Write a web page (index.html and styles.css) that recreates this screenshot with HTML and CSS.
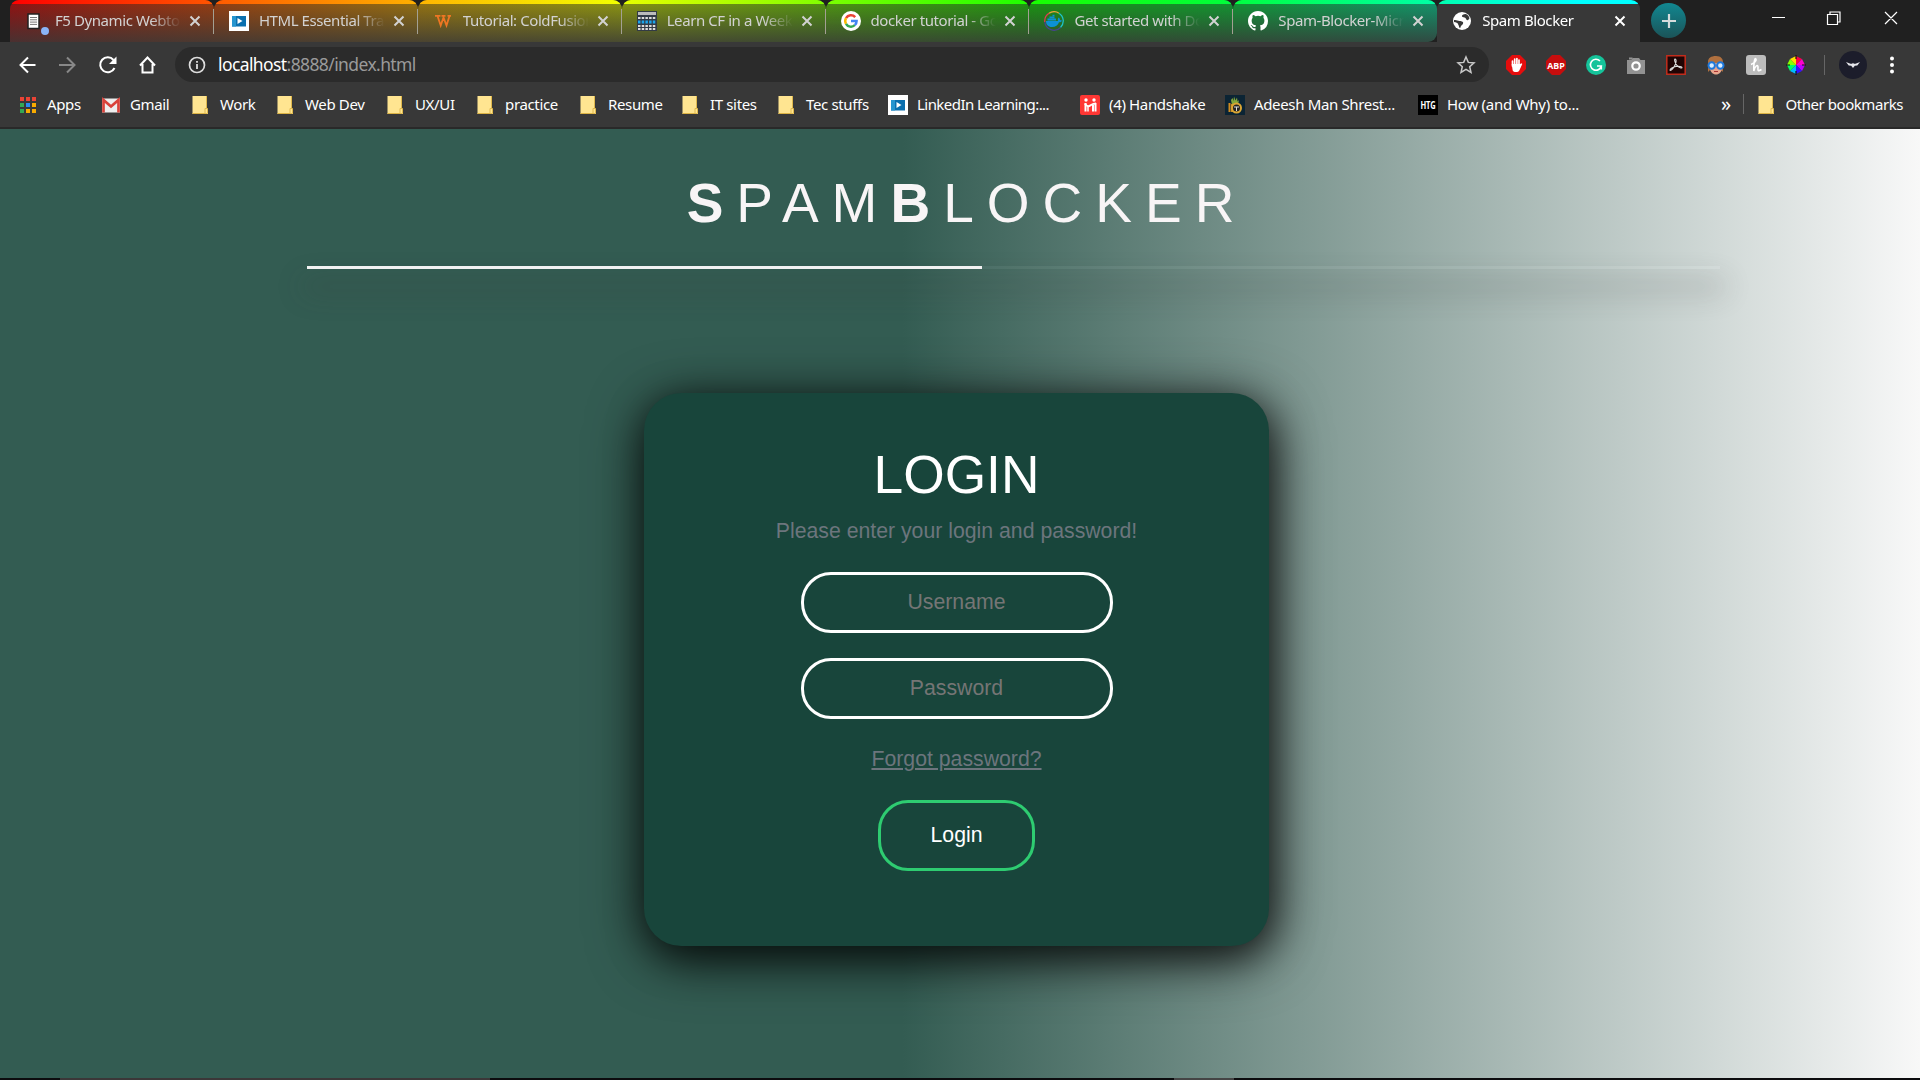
FILE: index.html
```html
<!DOCTYPE html>
<html lang="en">
<head>
<meta charset="utf-8">
<title>Spam Blocker</title>
<link rel="stylesheet" href="styles.css">
</head>
<body>
<svg class="defs" width="0" height="0">
  <defs>
    <symbol id="close" viewBox="0 0 12 12"><path d="M1.500 1.500l9 9M10.500 1.500l-9 9" stroke="currentColor" stroke-width="2" fill="none"/></symbol>
    <symbol id="folder" viewBox="0 0 20 20"><path d="M1.500 1h14v13h1.500v5H1.500z" fill="#ffe591"/><path d="M1.500 18.500H16" stroke="#dcb344"/><path d="M15.500 1v12.500M14 18.500v-5h2.500v5z" stroke="#e0b94d" fill="#ffe591"/></symbol>
    <symbol id="learn" viewBox="0 0 20 20"><path d="M0 0h20v20H0z" fill="#fff"/><path d="M3 5h14v10.500H3z" fill="#0a6fae"/><path d="M3 5h4v10.500H3z" fill="#2695cf"/><path d="M8.500 7l5 3-5 3z" fill="#fff"/></symbol>
  </defs>
</svg>
<header class="browser">
  <div class="tabstrip">
    <div class="tab t1">
      <svg class="fav" viewBox="0 0 20 20"><path d="M3 3h11v14.500H3z" fill="#fff" stroke="#222" stroke-width="1.500"/><path d="M5 6.500h7M5 8.800h7M5 11.100h7M5 13.400h7" stroke="#777"/></svg>
      <span class="title">F5 Dynamic Webtop</span><svg class="x"><use href="#close"/></svg><i class="dot"></i>
    </div>
    <div class="tab t2"><svg class="fav"><use href="#learn"/></svg><span class="title">HTML Essential Training</span><svg class="x"><use href="#close"/></svg></div>
    <div class="tab t3">
      <svg class="fav" viewBox="0 0 20 20"><path d="M2 4.800h5.500M8.500 4.800h4M14.500 4.800H18M4.500 5l3.200 9.500 2.800-8 3 8L16.500 5" fill="none" stroke="#ee7623" stroke-width="1.800"/></svg>
      <span class="title">Tutorial: ColdFusion</span><svg class="x"><use href="#close"/></svg>
    </div>
    <div class="tab t4">
      <svg class="fav" viewBox="0 0 20 20"><path d="M0 0h20v20H0z" fill="#333b45"/><path d="M1 1h18v3H1z" fill="#bbb"/><path d="M1 7h18M1 15h18M1 18h18" stroke="#ddd" stroke-width="2" stroke-dasharray="2.500 1.200"/><path d="M1 11h18" stroke="#1ca6ed" stroke-width="3" stroke-dasharray="2.500 1.200"/></svg>
      <span class="title">Learn CF in a Week</span><svg class="x"><use href="#close"/></svg>
    </div>
    <div class="tab t5">
      <svg class="fav" viewBox="0 0 20 20"><circle cx="10" cy="10" r="10" fill="#fff"/><g fill="none" stroke-width="2.500"><path d="M14.200 6.200A5.700 5.700 0 0 0 5 7.200" stroke="#ea4335"/><path d="M5 7.200a5.700 5.700 0 0 0 0 5.600" stroke="#fbbc05"/><path d="M5 12.800a5.700 5.700 0 0 0 8.800 1.400" stroke="#34a853"/><path d="M13.800 14.200A5.700 5.700 0 0 0 15.600 10H10" stroke="#4285f4"/></g></svg>
      <span class="title">docker tutorial - Google</span><svg class="x"><use href="#close"/></svg>
    </div>
    <div class="tab t6">
      <svg class="fav" viewBox="0 0 20 20"><g fill="none" stroke-width="1.300"><path d="M.8 11A9.200 9.200 0 0 1 5 2.300" stroke="#df3b52"/><path d="M5 2.300a9.200 9.200 0 0 1 10-.1" stroke="#e5a13b"/><path d="M15 2.200a9.200 9.200 0 0 1 1.500 14.300" stroke="#1dc3c9"/><path d="M.8 11a9.200 9.200 0 0 0 15.700 5.500" stroke="#48448d"/></g><path d="M2 10h12c-.5-2 0-3 .8-3.500.9.700 1.200 1.500 1.200 2.500l2 .5c-.5 1.500-2 1.700-3 1.700C14 14 11.500 16 8 16c-4 0-6-2.500-6-6zM3.500 7.500h8.500v2H3.500zM5.500 5.500h5v1.700h-5zM8.500 3.700h2v1.500h-2z" fill="#0c91d5"/></svg>
      <span class="title">Get started with Docker</span><svg class="x"><use href="#close"/></svg>
    </div>
    <div class="tab t7">
      <svg class="fav" viewBox="0 0 16 16"><path fill="#fff" d="M8 0C3.580 0 0 3.580 0 8c0 3.540 2.290 6.530 5.470 7.590.4.070.55-.17.55-.38 0-.19-.01-.82-.01-1.490-2.010.37-2.530-.49-2.690-.94-.09-.23-.48-.94-.82-1.130-.28-.15-.68-.52-.01-.53.63-.01 1.080.58 1.230.82.72 1.210 1.870.87 2.330.66.070-.52.280-.87.510-1.070-1.780-.2-3.640-.89-3.640-3.950 0-.87.310-1.590.82-2.150-.08-.2-.36-1.020.08-2.120 0 0 .67-.21 2.200.82a7.600 7.600 0 0 1 4 0c1.530-1.040 2.200-.82 2.200-.82.44 1.100.16 1.920.08 2.120.51.560.82 1.270.82 2.150 0 3.070-1.870 3.750-3.650 3.950.29.250.54.730.54 1.480 0 1.070-.01 1.930-.01 2.200 0 .21.15.46.55.38A8 8 0 0 0 16 8c0-4.420-3.580-8-8-8z"/></svg>
      <span class="title">Spam-Blocker-Micro</span><svg class="x"><use href="#close"/></svg>
    </div>
    <div class="tab active">
      <svg class="fav" viewBox="0 0 20 20"><circle cx="10" cy="10" r="9" fill="#fff"/><path d="M13.500 3c-2 0-4 1-3.500 2.500.4 1.200 2.500.5 3.500 1.500.8.800.3 2 2.500 2.300l1.500-2c-.5-2-2-3.800-4-4.300zM2 9c2.500-.5 3.500.8 5.500 1 2.500.3 4.300.5 3.500 2.800-.5 1.500-2.300 1.200-2.500 4l-1.500-.3c.3-2-.8-2.300-1-3.500-.2-1.300-2-1.500-4-2z" fill="#383838"/></svg>
      <span class="title">Spam Blocker</span><svg class="x"><use href="#close"/></svg>
    </div>
    <div class="newtab"><svg viewBox="0 0 14 14"><path d="M7 0v14M0 7h14" stroke="#d5dcdc" stroke-width="2.200"/></svg></div>
    <svg class="controls" viewBox="0 0 130 20"><g fill="none" stroke="#fff" stroke-width="1.200"><path d="M1 8.500h13M56.500 5.500h10v10h-10zM59 5.500V3h10v10h-2.500M114 3l12 12M126 3l-12 12"/></g></svg>
  </div>
  <div class="toolbar">
    <svg class="nav" viewBox="0 0 150 24"><g fill="none" stroke="#fff" stroke-width="2"><path d="M18.500 12H3.500M11 4.500L3.500 12l7.500 7.500"/><path d="M42 12h15.500M50 4.500l7.500 7.500-7.500 7.500" stroke="#888"/><path d="M96.500 7a7.500 7.500 0 1 0 1 8"/><path d="M123 12.500l7.500-8 7.500 8M125.500 11v8.500h10V11"/></g><path d="M99.500 3.500v7.500H92z" fill="#fff"/></svg>
    <div class="omnibox">
      <svg class="info" viewBox="0 0 18 18"><circle cx="9" cy="9" r="7.500" fill="none" stroke="#ddd" stroke-width="1.700"/><path d="M9 8v5M9 5v1.800" stroke="#ddd" stroke-width="1.800"/></svg>
      <span class="url"><b>localhost</b>:8888/index.html</span>
      <svg class="star" viewBox="0 0 20 20"><path d="M10 2l2.300 5.400 5.700.5-4.300 3.800 1.300 5.700-5-3-5 3 1.300-5.700L2 7.900l5.700-.5z" fill="none" stroke="#c8c8c8" stroke-width="1.500"/></svg>
    </div>
    <div class="exts">
      <svg viewBox="0 0 20 20"><path d="M6 0h8l6 6v8l-6 6H6l-6-6V6z" fill="#e40d0d"/><path d="M6.500 11V6M8.700 10V4M10.900 10V3.500M13 11V5" stroke="#fff" stroke-width="1.700" stroke-linecap="round"/><path d="M5.700 9H14l1.800-.8.500.8-3 6.500c-1 2-5.600 2-6.600 0z" fill="#fff"/></svg>
      <svg viewBox="0 0 20 20"><path d="M6 0h8l6 6v8l-6 6H6l-6-6V6z" fill="#c70d0d"/><text x="10" y="13.500" text-anchor="middle" class="abp" textLength="17.500" lengthAdjust="spacingAndGlyphs">ABP</text></svg>
      <svg viewBox="0 0 20 20"><circle cx="10" cy="10" r="10" fill="#15c39a"/><path d="M14 6a5.500 5.500 0 1 0 1.300 5H11M15.300 11v3.500" stroke="#fff" stroke-width="1.600" fill="none"/></svg>
      <svg viewBox="0 0 20 20"><path d="M1 5h4.500L7 3h6l1.500 2H19v14H1zM3 2.500h3.500v2H3z" fill="#929292"/><circle cx="10" cy="11" r="3.700" fill="none" stroke="#fff" stroke-width="2.200"/></svg>
      <svg viewBox="0 0 20 20"><path d="M.8.800h18.400v18.400H.8z" fill="#200505" stroke="#c12c1c" stroke-width="1.500"/><path d="M9 4c2 0 1 5-1 8s-4 4-4 3 3-3 6-3.500 6 0 6 1-3 .5-5-2S8 4 9 4z" fill="none" stroke="#ddd" stroke-width="1.100"/></svg>
      <svg viewBox="0 0 20 20"><path d="M2 17V7c0-4 3-6 8-6s7 3 7 6v10l-2-2H4z" fill="#b0703f"/><path d="M4 8h12v5c0 4-3 6.500-6 6.500S4 17 4 13z" fill="#e9a58c"/><path d="M4 8c5 0 8-2 9-4l3 4z" fill="#b0703f"/><g fill="#d8ecff" stroke="#1d78dc" stroke-width="2"><circle cx="5.700" cy="10.500" r="3.200"/><circle cx="14.300" cy="10.500" r="3.200"/></g><path d="M8 16.500h4" stroke="#a33"/></svg>
      <svg viewBox="0 0 20 20"><rect width="20" height="20" rx="3" fill="#bcbcbc"/><path d="M5 9.500C9 8 11 5 9.800 3.800S7.500 9 7.800 16c1-5 4.200-7 4.200-4s-1 5 3.500 2.500" fill="none" stroke="#fff" stroke-width="1.600"/></svg>
      <svg viewBox="0 0 20 20"><g transform="translate(10 10)"><path d="M0 0V-9L6-6z" fill="#f04"/><path d="M0 0L6-6 9 0z" fill="#f0c"/><path d="M0 0h9L6 6z" fill="#b0f"/><path d="M0 0l6 6-6 3z" fill="#31f"/><path d="M0 0v9l-6-3z" fill="#0bf"/><path d="M0 0l-6 6-3-6z" fill="#0f6"/><path d="M0 0h-9l3-6z" fill="#8f0"/><path d="M0 0l-6-6 6-3z" fill="#fd0"/><path d="M0-10v4M0 6v4M-10 0h4M6 0h4" stroke="#111" stroke-width="1.200"/></g></svg>
    </div>
    <i class="sep"></i>
    <svg class="avatar" viewBox="0 0 28 28"><circle cx="14" cy="14" r="14" fill="#1c1d2b"/><path d="M7 11l4.500 1.700h1.700l.8-.9.800.9h1.700L21 11l-2.700 3.500-2.500.3L14 17l-1.800-2.200-2.500-.3z" fill="#e6e6ec"/></svg>
    <svg class="menu" viewBox="0 0 6 20"><g fill="#fff"><circle cx="3" cy="3.500" r="2"/><circle cx="3" cy="10" r="2"/><circle cx="3" cy="16.500" r="2"/></g></svg>
  </div>
  <nav class="bookmarks">
    <a class="bm"><svg viewBox="0 0 20 20"><path d="M2 2h4v4H2zM8 2h4v4H8zM14 2h4v4h-4z" fill="#ea4335"/><path d="M2 8h4v4H2zM2 14h4v4H2z" fill="#34a853"/><path d="M8 8h4v4H8z" fill="#2a8bf2"/><path d="M14 8h4v4h-4zM8 14h4v4H8zM14 14h4v4h-4z" fill="#f9ab00"/></svg>Apps</a>
    <a class="bm"><svg viewBox="0 0 20 20"><path d="M1 3.500h18v14H1z" fill="#eee"/><path d="M2.500 17.500V5l7.500 6.500L17.500 5v12.500" fill="none" stroke="#d9423a" stroke-width="2.700"/></svg>Gmail</a>
    <a class="bm"><svg><use href="#folder"/></svg>Work</a>
    <a class="bm"><svg><use href="#folder"/></svg>Web Dev</a>
    <a class="bm"><svg><use href="#folder"/></svg>UX/UI</a>
    <a class="bm"><svg><use href="#folder"/></svg>practice</a>
    <a class="bm"><svg><use href="#folder"/></svg>Resume</a>
    <a class="bm"><svg><use href="#folder"/></svg>IT sites</a>
    <a class="bm"><svg><use href="#folder"/></svg>Tec stuffs</a>
    <a class="bm tight"><svg><use href="#learn"/></svg>LinkedIn Learning:...</a>
    <a class="bm"><svg viewBox="0 0 20 20"><rect width="20" height="20" rx="2" fill="#ff3734"/><path d="M5.500 8v8.500M13 10v6.500M15.500 8v8.500" stroke="#fff" stroke-width="2" fill="none"/><path d="M5 8.500c2 4 4 3 6 1.500 1.500-1 3-1.500 5-1.500" stroke="#fff" stroke-width="2" fill="none"/><path d="M8 11.500v5" stroke="#fff" stroke-width="1.500"/><circle cx="6" cy="5" r="1.700" fill="#fff"/><circle cx="14" cy="5" r="1.700" fill="#fff"/></svg>(4) Handshake</a>
    <a class="bm"><svg viewBox="0 0 20 20"><path d="M0 0h20v20H0z" fill="#0b2434"/><path d="M6 5l1.500-2 1 3L9 1.500l1.500 4 1.500-3 .5 4L14 5l-1 5H7z" fill="#82a83b"/><path d="M4.500 8v9M7 9v8" stroke="#d18c20" stroke-width="2"/><circle cx="11.500" cy="13" r="4.500" fill="#222" stroke="#dba634" stroke-width="2"/><path d="M9 12h5M11.500 12v4" stroke="#ddd"/></svg>Adeesh Man Shrest...</a>
    <a class="bm how"><svg viewBox="0 0 20 20"><path d="M0 0h20v20H0z"/><text x="10" y="14" text-anchor="middle" class="htg" textLength="15" lengthAdjust="spacingAndGlyphs">HTG</text></svg>How (and Why) to...</a>
    <a class="more">»</a>
    <a class="bm other"><svg><use href="#folder"/></svg>Other bookmarks</a>
  </nav>
</header>
<main class="page">
  <h1 class="brand"><b>S</b>PAM<b>B</b>LOCKER</h1>
  <div class="rule"><i></i></div>
  <form class="card">
    <h2>LOGIN</h2>
    <p>Please enter your login and password!</p>
    <input type="text" placeholder="Username">
    <input type="password" placeholder="Password">
    <a class="forgot">Forgot password?</a>
    <button type="button">Login</button>
  </form>
</main>
<footer class="taskbar"><i class="app"></i><i class="app small"></i></footer>
</body>
</html>
```
FILE: styles.css
```css
* { box-sizing: border-box; }
body { margin: 0; width: 1920px; height: 1080px; overflow: hidden; display: flex; flex-direction: column; font-family: "Liberation Sans", Arial, sans-serif; }
svg { display: block; flex: none; }
.defs { position: absolute; }

.browser { flex: none; height: 129px; background: #383838; border-bottom: 2px solid #292929; color: #fff; font: 15px "Noto Sans", "Open Sans", sans-serif; }
.tabstrip { height: 42px; background: #202020; display: flex; padding-left: 10px; }
.tab { position: relative; width: 203.900px; height: 42px; flex: none; display: flex; align-items: center; padding: 0 13px 0 15px; border-radius: 9px 9px 0 0; color: #d2d2d2; overflow: hidden; }
.tab::before { content: ""; position: absolute; inset: 0 0 auto; height: 4px; background: var(--line); }
.tab::after { content: ""; position: absolute; right: 0; top: 9px; width: 1px; height: 25px; background: #a3a093; }
.fav { width: 20px; height: 20px; }
.title { flex: 1; margin: 0 8px 2px 10px; overflow: hidden; white-space: nowrap; letter-spacing: -.42px; -webkit-mask-image: linear-gradient(90deg, #000 76%, transparent 100%); mask-image: linear-gradient(90deg, #000 76%, transparent 100%); }
.x { width: 12px; height: 12px; }
.dot { position: absolute; left: 31px; top: 27px; width: 8px; height: 8px; border-radius: 50%; background: #8ab4f8; }
.t1 { --line: linear-gradient(90deg, #f00, #f50); background: linear-gradient(#0000 5%, #383838cc), linear-gradient(90deg, #911212, #943d12); }
.t2 { --line: linear-gradient(90deg, #ff5a00, #ffb000); background: linear-gradient(#0000 5%, #383838cc), linear-gradient(90deg, #943e12, #947012); }
.t3 { --line: linear-gradient(90deg, #ffb500, #f2ff00); background: linear-gradient(#0000 5%, #383838cc), linear-gradient(90deg, #947212, #8b9412); }
.t4 { --line: linear-gradient(90deg, #e6ff00, #80ff00); background: linear-gradient(#0000 5%, #383838cc), linear-gradient(90deg, #879412, #519412); }
.t5 { --line: linear-gradient(90deg, #7bff00, #1eff00); background: linear-gradient(#0000 5%, #383838cc), linear-gradient(90deg, #4e9412, #1f9412); }
.t6 { --line: linear-gradient(90deg, #19ff00, #00ff3c); background: linear-gradient(#0000 5%, #383838cc), linear-gradient(90deg, #1a9412, #129432); }
.t7 { --line: linear-gradient(90deg, #00ff40, #00ffa6); background: linear-gradient(#0000 5%, #383838cc), linear-gradient(90deg, #129434, #12946c); border-bottom-right-radius: 9px; }
.active { --line: linear-gradient(90deg, #00ffb0, #0ff 70%); background: #383838; color: #fff; width: 203px; padding-right: 14px; }
.t7::after, .active::after { display: none; }
.newtab { width: 35px; height: 35px; margin: 3px 0 0 11px; border-radius: 50%; background: linear-gradient(#118891, #1b5358); display: grid; place-items: center; }
.newtab svg { width: 14px; height: 14px; }
.controls { width: 130px; height: 20px; margin: 9px 19px 0 auto; }

.toolbar { height: 45px; display: flex; align-items: center; }
.nav { width: 150px; height: 24px; margin: 0 8px 0 17px; }
.omnibox { width: 1314px; height: 35px; border-radius: 18px; background: #2b2b2b; display: flex; align-items: center; padding: 0 13px 0 13px; }
.info { width: 18px; height: 18px; margin-right: 12px; }
.url { font-size: 17.500px; letter-spacing: -.6px; color: #9a9a9a; flex: 1; margin-bottom: 1px; }
.url b { font-weight: 400; color: #fff; }
.star { width: 20px; height: 20px; }
.exts { display: flex; gap: 20px; margin-left: 17px; }
.exts svg { width: 20px; height: 20px; }
.abp { font: 700 9px "Open Sans", sans-serif; fill: #fff; }
.htg { font: 700 10.500px "Open Sans", sans-serif; fill: #fff; }
.sep { width: 1px; height: 20px; background: #666; margin: 0 14px 0 18px; }
.avatar { width: 28px; height: 28px; }
.menu { width: 6px; height: 20px; margin-left: 22px; }

.bookmarks { height: 36px; display: grid; align-items: center; padding-left: 18px; grid-template-columns: 83px 90px 85px 110px 90px 103px 102px 96px 111px 192px 145px 193px 303px 21.500px 1fr; }
.bm { display: flex; align-items: center; gap: 9px; white-space: nowrap; letter-spacing: -.35px; height: 20px; margin-bottom: 2px; line-height: 20px; }
.bm.tight { letter-spacing: -.55px; }
.bm.how { letter-spacing: -.25px; }
.more { font-size: 20px; line-height: 20px; margin-bottom: 3px; }
.bm svg { width: 20px; height: 20px; margin-top: 2px; }
.other { border-left: 1px solid #666; padding-left: 13px; letter-spacing: -.45px; }

.page { flex: 1; display: flex; flex-direction: column; align-items: center; background: linear-gradient(90deg, #335c52 47%, #f8f8f8 100%); }
.brand { margin: 43px 0 0; font-weight: 400; font-size: 55px; line-height: 62px; letter-spacing: 13px; color: #f8f5f6; padding-left: 14px; }
.rule { width: 1413px; height: 3px; margin: 32px 0 0 107px; background: rgba(255,255,255,.05); box-shadow: 0 19px 28px 5px rgba(60,60,60,.23); }
.rule i { display: block; width: 675px; height: 3px; background: #f2f2f2; }
.card { width: 625px; height: 553px; margin: 124px 7px 0 0; border-radius: 37.500px; background: #18453b; box-shadow: 2px 11px 56px rgba(0,0,0,.8), 4px 10px 38px rgba(0,0,0,.5); display: flex; flex-direction: column; align-items: center; padding-top: 51px; font-size: 21.250px; color: #6c757d; }
.card h2 { margin: 0; font-weight: 400; font-size: 53.300px; line-height: 62px; color: #fff; }
.card p { margin: 10px 0 0; line-height: 31px; }
.card input { width: 312px; height: 61px; border: 3px solid #fff; border-radius: 30px; background: none; text-align: center; font: 21.250px "Liberation Sans", Arial, sans-serif; margin-top: 25px; padding: 0; }
.card input + input { margin-top: 25px; }
.card input::placeholder { color: #757575; }
.forgot { margin-top: 25px; line-height: 30px; text-decoration: underline; }
.card button { width: 157px; height: 71px; margin-top: 26px; border: 3px solid #2ecc71; border-radius: 30px; background: none; color: #fff; font: 21.250px "Liberation Sans", Arial, sans-serif; }

.taskbar { flex: none; height: 2px; background: #0c0c0e; display: flex; padding-left: 60px; gap: 684px; }
.app { width: 430px; background: #3b3738; }
.app.small { width: 60px; background: #454545; }
```
